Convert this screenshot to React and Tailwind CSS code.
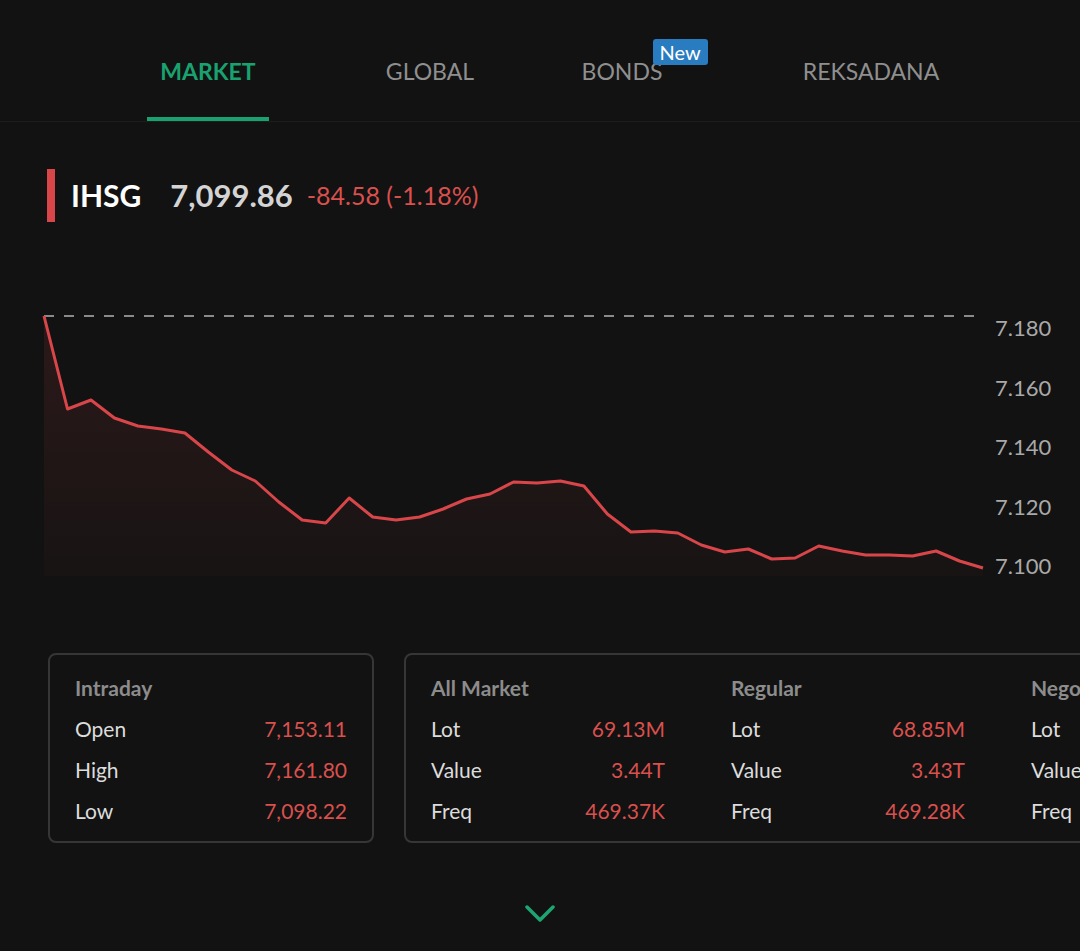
import React from "react";

const pts = [
  [44, 317], [67.5, 410], [91, 401], [114.4, 419], [137.9, 427], [161.4, 430], [184.9, 434],
  [208.3, 453], [231.8, 471], [255.3, 482], [278.8, 503], [302.2, 521], [325.7, 524],
  [349.2, 499], [372.7, 518], [396.1, 521], [419.6, 518], [443.1, 510], [466.6, 500],
  [490, 495], [513.5, 483], [537, 484], [560.5, 482], [583.9, 487], [607.4, 515],
  [630.9, 533], [654.4, 532], [677.8, 534], [701.3, 546], [724.8, 553], [748.3, 550],
  [771.7, 560], [795.2, 559], [818.7, 547], [842.2, 552], [865.6, 556], [889.1, 556],
  [912.6, 557], [936.1, 552], [959.5, 562], [983, 569],
];

const linePath = pts.map((p, i) => (i === 0 ? "M" : "L") + p[0] + " " + p[1]).join(" ");
const areaPath = linePath + " L983 577 L44 577 Z";

const font = { fontFamily: "Lato, 'Open Sans', sans-serif" };

function Row({ label, value, w }) {
  return (
    <div className={`flex h-[41px] items-center justify-between ${w}`}>
      <span className="text-[21px] text-[#dcdcdc]">{label}</span>
      <span className="text-[21px] text-[#d9504d]">{value}</span>
    </div>
  );
}

function Col({ title, rows, w }) {
  return (
    <div className={`flex flex-col ${w} shrink-0`}>
      <div className="flex h-[41px] items-center text-[21px] font-bold text-[#8c8c8c]">{title}</div>
      {rows.map((r) => (
        <Row key={r[0]} label={r[0]} value={r[1]} w={w} />
      ))}
    </div>
  );
}

export default function App() {
  return (
    <div className="w-[1080px] h-[951px] overflow-hidden bg-[#121212]" style={font}>
      {/* Tabs */}
      <div className="flex h-[122px] border-b-[1.5px] border-[#1d1d1d] pl-[147px]">
        <div className="flex w-[122px] flex-col">
          <div className="flex flex-1 items-center justify-center pt-[26px] text-[23px] font-bold text-[#19a26f]">MARKET</div>
          <div className="h-[4.5px] bg-[#19a26f]" />
        </div>
        <div className="ml-[100px] flex w-[122px] flex-col">
          <div className="flex flex-1 items-center justify-center pt-[26px] pb-[4.5px] text-[23px] text-[#8f8f8f]">GLOBAL</div>
        </div>
        <div className="ml-[70px] flex w-[122px] flex-col">
          <div className="flex flex-1 items-center justify-center pt-[26px] pb-[4.5px] text-[23px] text-[#8f8f8f]">
            <span className="relative">
              BONDS
              <span className="absolute left-[71px] top-[-15px] flex h-[26px] items-center rounded-[3px] bg-[#2a7cc0] px-[7px] text-[20px] text-white">New</span>
            </span>
          </div>
        </div>
        <div className="ml-[108px] flex w-[160px] flex-col">
          <div className="flex flex-1 items-center justify-center pt-[26px] pb-[4.5px] text-[23px] text-[#8f8f8f]">REKSADANA</div>
        </div>
      </div>

      {/* Header */}
      <div className="mt-[47px] flex h-[53px] items-center pl-[47px]">
        <div className="h-[53px] w-[8px] bg-[#d9464a]" />
        <span className="ml-[16px] text-[30px] font-bold text-white">IHSG</span>
        <span className="ml-[29px] text-[31px] font-bold text-[#d4d4d4]">7,099.86</span>
        <span className="ml-[14px] text-[25px] text-[#d9504d]">-84.58 (-1.18%)</span>
      </div>

      {/* Chart */}
      <div className="mt-[67px] h-[300px]">
        <svg width="1080" height="300" viewBox="0 290 1080 300">
          <defs>
            <linearGradient id="fillg" x1="0" y1="0" x2="0" y2="1">
              <stop offset="0%" stopColor="#d9464a" stopOpacity="0.13" />
              <stop offset="100%" stopColor="#d9464a" stopOpacity="0.03" />
            </linearGradient>
          </defs>
          <path d={areaPath} fill="url(#fillg)" />
          <line x1="44" y1="317" x2="976" y2="317" stroke="#8a8a8a" strokeWidth="2" strokeDasharray="10 10" />
          <path d={linePath} fill="none" stroke="#d9464a" strokeWidth="3" strokeLinejoin="round" />
          {[
            ["7.180", 337],
            ["7.160", 397],
            ["7.140", 456],
            ["7.120", 516],
            ["7.100", 575],
          ].map(([t, y]) => (
            <text key={t} x="995" y={y} fill="#a9a9a9" fontSize="22" style={font}>
              {t}
            </text>
          ))}
        </svg>
      </div>

      {/* Cards */}
      <div className="mt-[64px] flex gap-[30px] pl-[48px]">
        <div className="flex h-[190px] w-[326px] shrink-0 flex-col rounded-[8px] border-2 border-[#363636] px-[25px] pt-[12px]">
          <Col
            title="Intraday"
            w="w-full"
            rows={[
              ["Open", "7,153.11"],
              ["High", "7,161.80"],
              ["Low", "7,098.22"],
            ]}
          />
        </div>
        <div className="flex h-[190px] w-[900px] shrink-0 gap-[66px] rounded-[8px] border-2 border-[#363636] pl-[25px] pt-[12px]">
          <Col
            title="All Market"
            w="w-[234px]"
            rows={[
              ["Lot", "69.13M"],
              ["Value", "3.44T"],
              ["Freq", "469.37K"],
            ]}
          />
          <Col
            title="Regular"
            w="w-[234px]"
            rows={[
              ["Lot", "68.85M"],
              ["Value", "3.43T"],
              ["Freq", "469.28K"],
            ]}
          />
          <Col
            title="Negotiation"
            w="w-[234px]"
            rows={[
              ["Lot", "0.28M"],
              ["Value", "0.01T"],
              ["Freq", "0.09K"],
            ]}
          />
        </div>
      </div>

      {/* Chevron */}
      <div className="mt-[61px] flex justify-center">
        <svg width="30" height="20" viewBox="0 0 30 20">
          <path d="M2 3 L15 16 L28 3" fill="none" stroke="#1ea672" strokeWidth="3.5" strokeLinecap="round" strokeLinejoin="round" />
        </svg>
      </div>
    </div>
  );
}
